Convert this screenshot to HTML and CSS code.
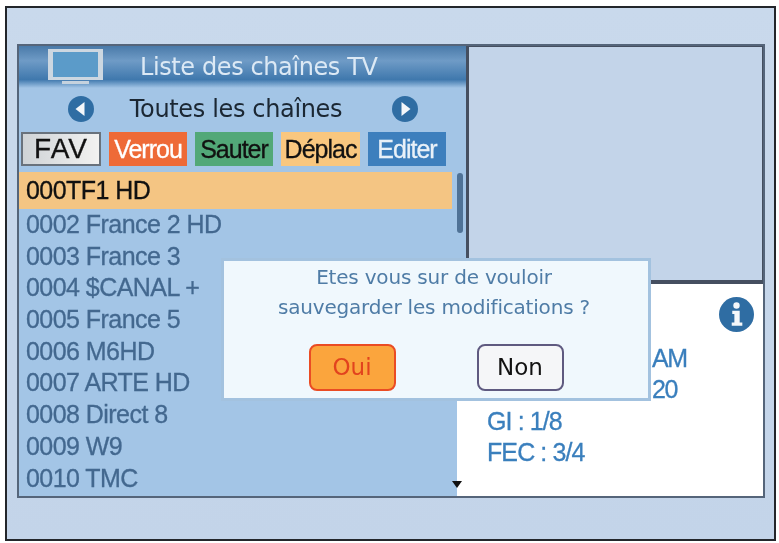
FILE: index.html
```html
<!DOCTYPE html>
<html lang="fr">
<head>
    <meta charset="UTF-8">
    <title>Liste des chaînes TV</title>
    <link rel="stylesheet" href="styles.css">
</head>
<body>
    <div class="screen">
        <div class="panel">
            <section class="channels">
                <header class="title-bar">
                    <svg class="tv-icon" width="55" height="36" viewBox="0 0 55 36">
                        <rect x="0" y="0" width="55" height="31" fill="#ccd7e1"/>
                        <rect x="5" y="3" width="45" height="25" fill="#5b9bc9"/>
                        <rect x="14" y="32" width="27" height="3" fill="#c5d2de"/>
                    </svg>
                    <h1>Liste des chaînes TV</h1>
                </header>
                <div class="group-row">
                    <svg class="arrow" width="26" height="26" viewBox="0 0 26 26">
                        <circle cx="13" cy="13" r="13" fill="#2f6da3"/>
                        <path d="M16.500 6 L16.500 20 L7.500 13 Z" fill="#f4f7fa"/>
                    </svg>
                    <span class="group-name">Toutes les chaînes</span>
                    <svg class="arrow" width="26" height="26" viewBox="0 0 26 26">
                        <circle cx="13" cy="13" r="13" fill="#2f6da3"/>
                        <path d="M9.500 6 L9.500 20 L18.500 13 Z" fill="#f4f7fa"/>
                    </svg>
                </div>
                <div class="tabs">
                    <span class="tab tab-fav">FAV</span>
                    <span class="tab tab-lock">Verrou</span>
                    <span class="tab tab-skip">Sauter</span>
                    <span class="tab tab-move">Déplac</span>
                    <span class="tab tab-edit">Editer</span>
                </div>
                <div class="list-area">
                    <ul class="channel-list">
                        <li class="selected">000TF1 HD</li>
                        <li>0002 France 2 HD</li>
                        <li>0003 France 3</li>
                        <li>0004 $CANAL +</li>
                        <li>0005 France 5</li>
                        <li>0006 M6HD</li>
                        <li>0007 ARTE HD</li>
                        <li>0008 Direct 8</li>
                        <li>0009 W9</li>
                        <li>0010 TMC</li>
                    </ul>
                    <div class="scrollbar"><span class="thumb"></span><span class="down"></span></div>
                </div>
            </section>
            <section class="side">
                <div class="preview"></div>
                <div class="info">
                    <svg class="info-icon" width="35" height="35" viewBox="0 0 33 33">
                        <circle cx="16.500" cy="16.500" r="16.500" fill="#2f6da3"/>
                        <circle cx="16.500" cy="8" r="3" fill="#f4f7fa"/>
                        <path d="M12.500 13 H19.500 V24 H22 V27 H12 V24 H14.500 V16 H12.500 Z" fill="#f4f7fa"/>
                    </svg>
                    <!-- first two lines are hidden behind the dialog, only their ends show -->
                    <p class="tail">AM</p>
                    <p class="tail">20</p>
                    <p>GI : 1/8</p>
                    <p>FEC : 3/4</p>
                </div>
            </section>
        </div>
        <div class="dialog">
            <p>Etes vous sur de vouloir</p>
            <p>sauvegarder les modifications ?</p>
            <div class="dialog-buttons">
                <span class="btn btn-yes">Oui</span>
                <span class="btn btn-no">Non</span>
            </div>
        </div>
    </div>
</body>
</html>
```

FILE: styles.css
```css
* {
    margin: 0;
    padding: 0;
    box-sizing: border-box;
}

body {
    background-color: #fff;
    font-family: "Liberation Sans", Arial, sans-serif;
    padding: 6px 3px 2px 5px;
}

.screen {
    position: relative;
    width: 771px;
    height: 535px;
    border: 2px solid #23262b;
    background: linear-gradient(#c9d9ec, #c3d4e9);
    padding: 36px 10px 0 10px;
    filter: blur(0.5px);
}

.panel {
    display: flex;
    width: 748px;
    height: 454px;
    border: 2px solid #55657a;
}

.channels {
    width: 447px;
    display: flex;
    flex-direction: column;
    background-color: #a3c5e6;
}

.title-bar {
    display: flex;
    align-items: center;
    height: 42px;
    padding-left: 29px;
    background: linear-gradient(#4a7aa9, #6f9bc6 35%, #3f78ad 80%, #a3c5e6);
}

.title-bar h1 {
    margin-left: 37px;
    font-family: "DejaVu Sans", sans-serif;
    font-size: 24px;
    font-weight: normal;
    letter-spacing: -0.400px;
    color: #dce9f5;
}

.group-row {
    display: flex;
    align-items: center;
    height: 42px;
    padding-left: 49px;
}

.group-name {
    width: 298px;
    padding-right: 14px;
    font-family: "DejaVu Sans", sans-serif;
    font-size: 24px;
    letter-spacing: -0.350px;
    text-align: center;
    white-space: nowrap;
    color: #1b2733;
}

.tabs {
    display: flex;
    gap: 8px;
    padding: 2px 0 0 2px;
    height: 42px;
}

.tab {
    display: flex;
    align-items: center;
    justify-content: center;
    height: 34px;
    font-size: 25px;
    letter-spacing: -1px;
    -webkit-text-stroke: 0.3px;
    color: #111;
}

.tab-fav {
    width: 80px;
    font-size: 28px;
    letter-spacing: 1px;
    background: linear-gradient(90deg, #cfd3d6, #f2f2f1);
    border: 2px solid #69727c;
}

.tab-lock {
    width: 78px;
    color: #fff;
    background-color: #ee6a37;
}

.tab-skip {
    width: 78px;
    background-color: #52a878;
}

.tab-move {
    width: 79px;
    background-color: #f9c77f;
}

.tab-edit {
    width: 78px;
    color: #e9f1f8;
    background-color: #3d7fbd;
}

.list-area {
    position: relative;
    flex: 1;
}

.channel-list {
    list-style: none;
}

.channel-list li {
    height: 31.700px;
    line-height: 31px;
    padding-left: 7px;
    font-size: 25px;
    letter-spacing: -0.550px;
    -webkit-text-stroke: 0.3px;
    color: #43688f;
}

.channel-list .selected {
    height: 37px;
    line-height: 36px;
    width: 433px;
    color: #111;
    background-color: #f4c583;
}

.scrollbar {
    position: absolute;
    top: 0;
    right: 0;
    bottom: 0;
    width: 14px;
}

.thumb {
    position: absolute;
    top: 1px;
    left: 5px;
    width: 6px;
    height: 60px;
    border-radius: 3px;
    background-color: #4f7296;
}

.down {
    position: absolute;
    z-index: 2;
    bottom: 8px;
    left: 0;
    border-left: 5px solid transparent;
    border-right: 5px solid transparent;
    border-top: 7px solid #111;
}

.side {
    flex: 1;
    display: flex;
    flex-direction: column;
}

.preview {
    height: 238px;
    background-color: #c3d4e9;
    border-top: 1px solid #454f60;
    border-left: 3px solid #454f60;
    border-right: 1px solid #454f60;
    border-bottom: 4px solid #454f60;
}

.info {
    position: relative;
    flex: 1;
    margin-left: -9px;
    padding: 59px 0 0 30px;
    background-color: #fff;
}

.info p {
    height: 31.300px;
    line-height: 31px;
    font-size: 25px;
    letter-spacing: -0.900px;
    -webkit-text-stroke: 0.3px;
    color: #3a7fbd;
}

.info .tail {
    padding-left: 165px;
    letter-spacing: -1.500px;
}

.info-icon {
    position: absolute;
    top: 13px;
    right: 9px;
}

.dialog {
    position: absolute;
    top: 250px;
    left: 214px;
    width: 430px;
    height: 143px;
    padding: 1px 4px 0 0;
    border: 3px solid #a3c2df;
    background-color: #f0f8fd;
    text-align: center;
    font-family: "DejaVu Sans", sans-serif;
    font-size: 20px;
    line-height: 30px;
    letter-spacing: -0.200px;
    color: #4f7ca6;
}

.dialog-buttons {
    display: flex;
    justify-content: center;
    gap: 81px;
    margin-top: 22px;
    padding-left: 4px;
}

.btn {
    width: 87px;
    height: 47px;
    line-height: 43px;
    border-radius: 8px;
    font-size: 23px;
    letter-spacing: 0;
}

.btn-yes {
    color: #e2431e;
    background-color: #fba53d;
    border: 2px solid #ea4c24;
}

.btn-no {
    color: #111;
    background-color: #f5f6f8;
    border: 2px solid #5f5a80;
}
```
